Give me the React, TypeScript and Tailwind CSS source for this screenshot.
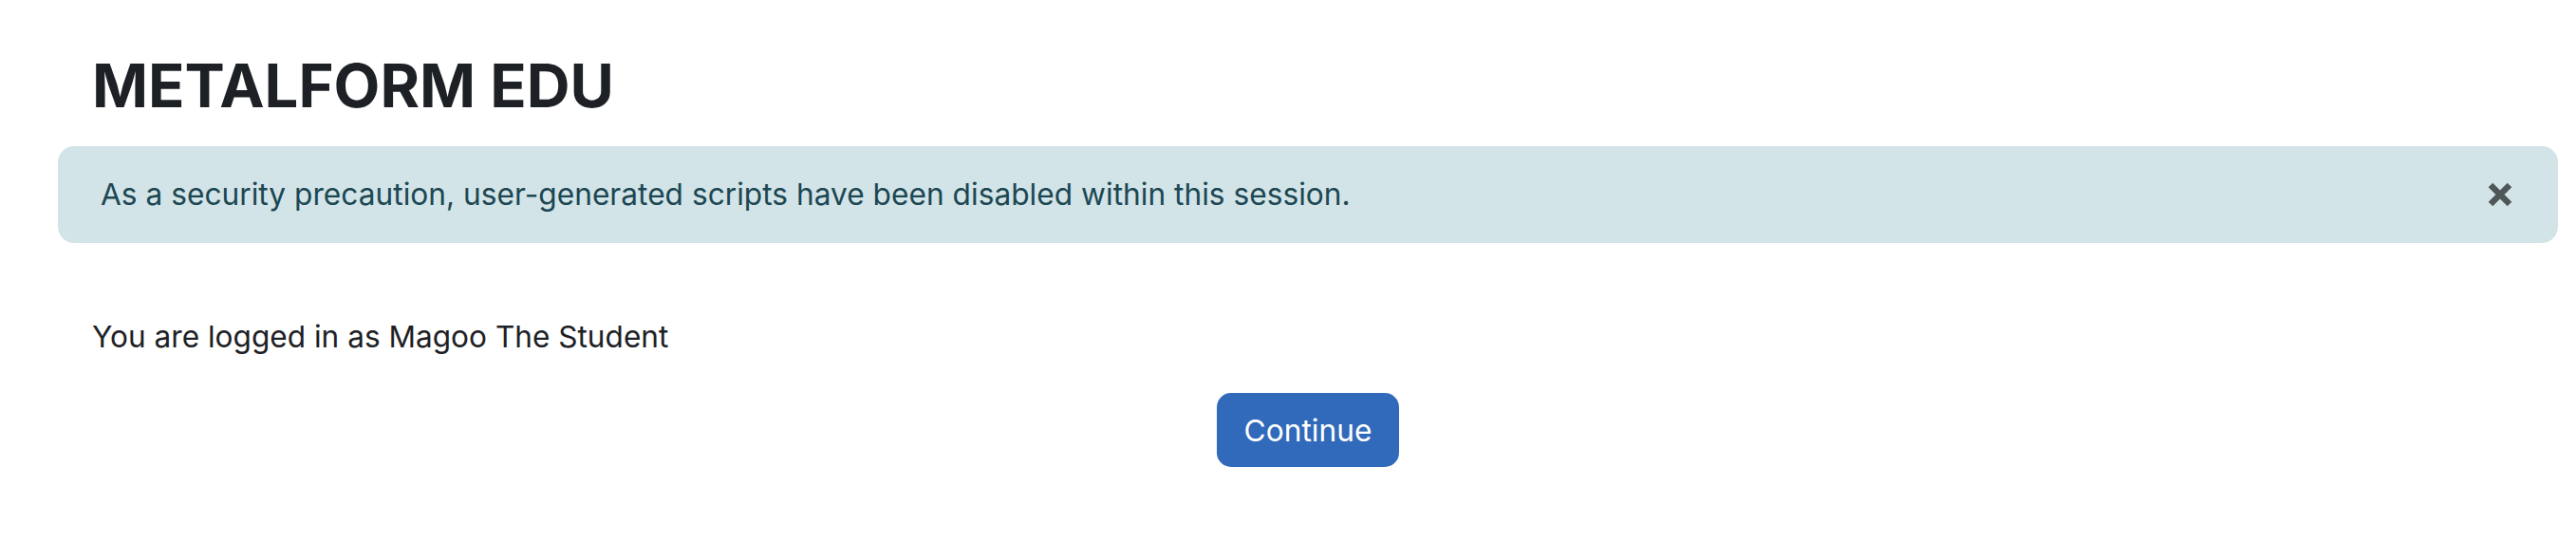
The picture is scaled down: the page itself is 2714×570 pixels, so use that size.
import { useState } from "react";

const FONT = { fontFamily: 'Inter, "Noto Sans", "Liberation Sans", sans-serif' };

function CloseIcon() {
  return (
    <svg width="26" height="26" viewBox="0 0 26 26" aria-hidden="true">
      <path d="M3 3 L23 23 M23 3 L3 23" stroke="#4f5657" strokeWidth="6.5" strokeLinecap="butt" />
    </svg>
  );
}

export default function App() {
  const [open, setOpen] = useState(true);
  return (
    <div className="min-h-[570px] w-full bg-white text-[#1d2125]" style={FONT}>
      <div className="pl-[61px] pr-[19px] pt-[52px]">
        <h1 className="pl-[36px] text-[63.4px] font-bold leading-[1.2]">METALFORM EDU</h1>

        {open && (
          <div className="mt-[26px] flex h-[102px] items-center justify-between rounded-[17px] bg-[#d2e4e8] pl-[45px] pr-[48px] text-[#1c4752]">
            <span className="text-[31.7px] leading-none">
              As a security precaution, user-generated scripts have been disabled within this session.
            </span>
            <button onClick={() => setOpen(false)} className="flex items-center">
              <CloseIcon />
            </button>
          </div>
        )}

        <p className="mt-[75px] pl-[36px] text-[31.6px] leading-[1.5]">You are logged in as Magoo The Student</p>

        <div className="mt-[36px] flex justify-center">
          <button className="flex h-[78px] w-[192px] items-center justify-center rounded-[15px] bg-[#3169bb] text-[31.7px] text-white">
            Continue
          </button>
        </div>
      </div>
    </div>
  );
}
